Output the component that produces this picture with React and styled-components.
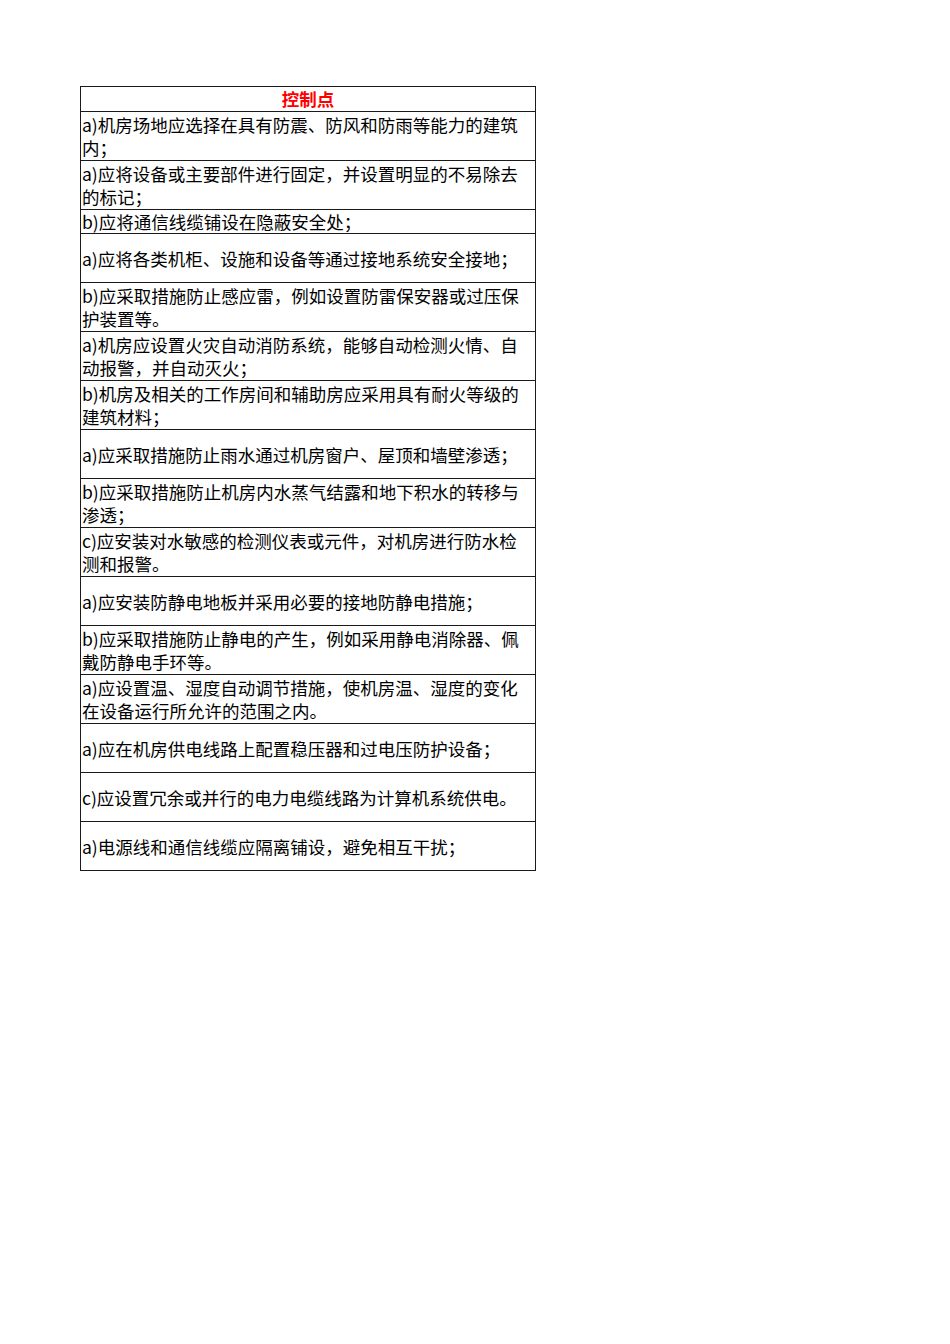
import React from "react";
import styled, { createGlobalStyle } from "styled-components";

const Global = createGlobalStyle`
  html, body { margin: 0; padding: 0; background: #fff; }
  body { font-family: "Noto Sans CJK SC", "Noto Sans", sans-serif; color: #000; }
`;

const Page = styled.div`
  width: 950px;
  min-height: 1344px;
  padding: 86px 0 0 80px;
  box-sizing: border-box;
`;

const Table = styled.table`
  border-collapse: collapse;
  table-layout: fixed;
  width: 456px;
`;

const HeadCell = styled.th`
  height: 24px;
  padding: 0;
  border: 1px solid #1a1a1a;
  color: #ff0000;
  font-weight: bold;
  font-size: 17.5px;
  line-height: 22px;
  text-align: center;
  vertical-align: middle;
`;

const Cell = styled.td`
  height: ${(p) => p.$h}px;
  padding: 0 8px 0 1px;
  border: 1px solid #1a1a1a;
  font-size: 17.5px;
  line-height: 23px;
  text-align: left;
  vertical-align: middle;
  box-sizing: border-box;
  overflow: hidden;
`;

const rows = [
  ["a)机房场地应选择在具有防震、防风和防雨等能力的建筑内；", 49],
  ["a)应将设备或主要部件进行固定，并设置明显的不易除去的标记；", 49],
  ["b)应将通信线缆铺设在隐蔽安全处；", 24],
  ["a)应将各类机柜、设施和设备等通过接地系统安全接地；", 49],
  ["b)应采取措施防止感应雷，例如设置防雷保安器或过压保护装置等。", 49],
  ["a)机房应设置火灾自动消防系统，能够自动检测火情、自动报警，并自动灭火；", 49],
  ["b)机房及相关的工作房间和辅助房应采用具有耐火等级的建筑材料；", 49],
  ["a)应采取措施防止雨水通过机房窗户、屋顶和墙壁渗透；", 49],
  ["b)应采取措施防止机房内水蒸气结露和地下积水的转移与渗透；", 49],
  ["c)应安装对水敏感的检测仪表或元件，对机房进行防水检测和报警。", 49],
  ["a)应安装防静电地板并采用必要的接地防静电措施；", 49],
  ["b)应采取措施防止静电的产生，例如采用静电消除器、佩戴防静电手环等。", 49],
  ["a)应设置温、湿度自动调节措施，使机房温、湿度的变化在设备运行所允许的范围之内。", 49],
  ["a)应在机房供电线路上配置稳压器和过电压防护设备；", 49],
  ["c)应设置冗余或并行的电力电缆线路为计算机系统供电。", 49],
  ["a)电源线和通信线缆应隔离铺设，避免相互干扰；", 49],
];

export default function App() {
  return (
    <Page>
      <Global />
      <Table>
        <thead>
          <tr>
            <HeadCell>控制点</HeadCell>
          </tr>
        </thead>
        <tbody>
          {rows.map(([t, h], i) => (
            <tr key={i}>
              <Cell $h={h}>{t}</Cell>
            </tr>
          ))}
        </tbody>
      </Table>
    </Page>
  );
}
